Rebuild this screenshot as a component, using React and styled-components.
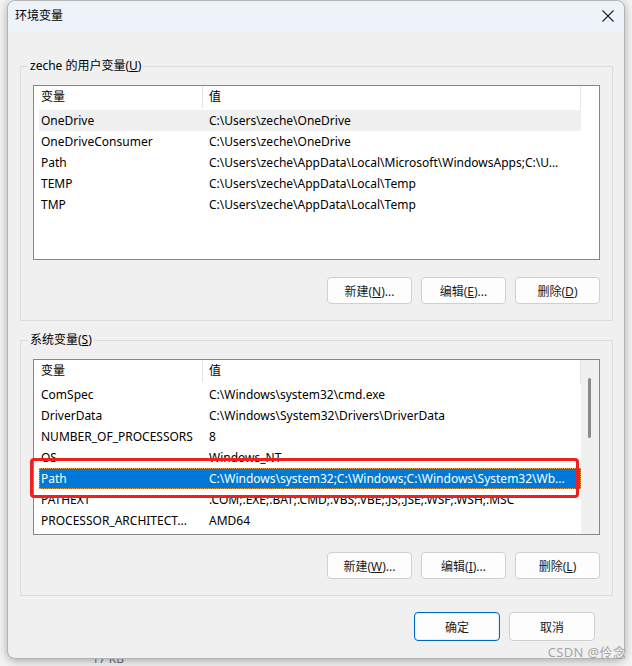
import React from "react";
import styled, { createGlobalStyle } from "styled-components";

const GlobalStyle = createGlobalStyle`
  body {
    margin: 0;
    background: #f3f3f3;
    font-family: "Noto Sans", "Noto Sans CJK SC", sans-serif;
    font-size: 12px;
    color: #000;
  }
`;

const Page = styled.div`
  position: relative;
  width: 632px;
  height: 666px;
  overflow: hidden;
`;

const Window = styled.div`
  position: relative;
  z-index: 1;
  box-sizing: border-box;
  margin-left: 7px;
  width: 618px;
  height: 659px;
  background: #f0f0f0;
  border: 1px solid #b4b4b4;
  border-radius: 8px;
  box-shadow: 0 2px 9px rgba(0, 0, 0, 0.3);
  display: flex;
  flex-direction: column;
`;

const TitleBar = styled.div`
  height: 30px;
  flex: none;
  display: flex;
  align-items: center;
  justify-content: space-between;
  padding: 0 8px 0 7px;
  background: #eef3f9;
  border-radius: 8px 8px 0 0;
  line-height: 16px;
`;

const CloseButton = styled.div`
  width: 16px;
  height: 16px;
  display: flex;
  align-items: center;
  justify-content: center;
`;

const Content = styled.div`
  flex: 1;
  display: flex;
  flex-direction: column;
  padding: 27px 11px 0 12px;
`;

const Group = styled.fieldset`
  margin: 0 0 ${(p) => p.$gap || 0}px 0;
  padding: 11px 12px 16px 12px;
  border: 1px solid #dcdcdc;
  min-width: 0;
`;

const Legend = styled.legend`
  padding: 0 2px;
  margin-left: -5px;
  line-height: 16px;
`;

const ListBox = styled.div`
  position: relative;
  box-sizing: border-box;
  display: flex;
  height: ${(p) => p.$height}px;
  border: 1px solid #828790;
  background: #fff;
`;

const ListMain = styled.div`
  width: 547px;
  flex: none;
  display: flex;
  flex-direction: column;
`;

const ListSide = styled.div`
  flex: 1;
  position: relative;
  background: ${(p) => (p.$scroll ? "#f0f0f0" : "#fff")};
`;

const Thumb = styled.div`
  position: absolute;
  left: 7px;
  top: 18px;
  width: 3px;
  height: 60px;
  border-radius: 2px;
  background: #8a8a8a;
`;

const Header = styled.div`
  display: grid;
  grid-template-columns: 168px 1fr;
  height: 24px;
  line-height: 22px;
  border-right: 1px solid #e5e5e5;
`;

const HeaderCell = styled.div`
  padding-left: ${(p) => (p.$first ? 7 : 6)}px;
  border-left: ${(p) => (p.$first ? "none" : "1px solid #e5e5e5")};
  margin-bottom: 2px;
`;

const Rows = styled.div`
  padding-left: 5px;
  display: flex;
  flex-direction: column;
`;

const Row = styled.div`
  position: relative;
  display: grid;
  grid-template-columns: 163px 1fr;
  height: 21px;
  line-height: 21px;
  background: ${(p) =>
    p.$state === "active" ? "#0078d7" : p.$state === "soft" ? "#f0f0f0" : "transparent"};
  color: ${(p) => (p.$state === "active" ? "#fff" : "#000")};
  outline: ${(p) => (p.$state === "active" ? "1px dotted #e9a64a" : "none")};
  outline-offset: -1px;
`;

const Cell = styled.div`
  padding-left: ${(p) => (p.$first ? 2 : 7)}px;
  white-space: nowrap;
  overflow: hidden;
`;

const Marker = styled.div`
  position: absolute;
  left: -9px;
  top: -10px;
  width: 549px;
  height: 40px;
  box-sizing: border-box;
  border: 3px solid #f2201c;
  border-radius: 4px;
  z-index: 2;
  pointer-events: none;
`;

const ButtonRow = styled.div`
  display: flex;
  justify-content: flex-end;
  gap: ${(p) => p.$gap || 10}px;
  margin-top: ${(p) => p.$top || 0}px;
  padding-right: ${(p) => p.$right || 0}px;
`;

const Button = styled.button`
  box-sizing: border-box;
  width: ${(p) => p.$w || 85}px;
  height: ${(p) => p.$h || 27}px;
  padding: 0;
  font-family: inherit;
  font-size: 12px;
  color: #1b1b1b;
  background: #fdfdfd;
  border: 1px solid ${(p) => (p.$primary ? "#0067c0" : "#d0d0d0")};
  border-radius: 4px;
  box-shadow: ${(p) => (p.$primary ? "inset 0 0 0 1px #e6f0fa" : "none")};
`;

const Behind = styled.div`
  margin-top: -8px;
  padding-left: 92px;
  color: #65717e;
  font-size: 12px;
  line-height: 16px;
`;

const Watermark = styled.div`
  position: absolute;
  right: 6px;
  top: 642px;
  z-index: 3;
  font-size: 13px;
  color: rgba(150, 150, 150, 0.85);
  letter-spacing: 0.3px;
`;

const userVars = [
  ["OneDrive", "C:\\Users\\zeche\\OneDrive", "soft"],
  ["OneDriveConsumer", "C:\\Users\\zeche\\OneDrive"],
  ["Path", "C:\\Users\\zeche\\AppData\\Local\\Microsoft\\WindowsApps;C:\\U..."],
  ["TEMP", "C:\\Users\\zeche\\AppData\\Local\\Temp"],
  ["TMP", "C:\\Users\\zeche\\AppData\\Local\\Temp"],
];

const systemVars = [
  ["ComSpec", "C:\\Windows\\system32\\cmd.exe"],
  ["DriverData", "C:\\Windows\\System32\\Drivers\\DriverData"],
  ["NUMBER_OF_PROCESSORS", "8"],
  ["OS", "Windows_NT"],
  ["Path", "C:\\Windows\\system32;C:\\Windows;C:\\Windows\\System32\\Wb...", "active"],
  ["PATHEXT", ".COM;.EXE;.BAT;.CMD;.VBS;.VBE;.JS;.JSE;.WSF;.WSH;.MSC"],
  ["PROCESSOR_ARCHITECT...", "AMD64"],
];

const VarList = ({ rows, height, scroll }) => (
  <ListBox $height={height}>
    <ListMain>
      <Header>
        <HeaderCell $first>变量</HeaderCell>
        <HeaderCell>值</HeaderCell>
      </Header>
      <Rows>
        {rows.map(([name, value, state]) => (
          <Row key={name + value} $state={state}>
            <Cell $first>{name}</Cell>
            <Cell>{value}</Cell>
            {state === "active" && <Marker />}
          </Row>
        ))}
      </Rows>
    </ListMain>
    <ListSide $scroll={scroll}>{scroll && <Thumb />}</ListSide>
  </ListBox>
);

const App = () => {
  return (
    <Page>
      <GlobalStyle />
      <Window>
        <TitleBar>
          <span>环境变量</span>
          <CloseButton>
            <svg width="12" height="12" viewBox="0 0 12 12">
              <path d="M0.5 0.5 L11.5 11.5 M11.5 0.5 L0.5 11.5" stroke="#222" strokeWidth="1.1" fill="none" />
            </svg>
          </CloseButton>
        </TitleBar>
        <Content>
          <Group $gap={11}>
            <Legend>
              zeche 的用户变量(<u>U</u>)
            </Legend>
            <VarList rows={userVars} height={175} />
            <ButtonRow $top={17} $gap={9}>
              <Button>新建(<u>N</u>)...</Button>
              <Button>编辑(<u>E</u>)...</Button>
              <Button>删除(<u>D</u>)</Button>
            </ButtonRow>
          </Group>
          <Group>
            <Legend>
              系统变量(<u>S</u>)
            </Legend>
            <VarList rows={systemVars} height={176} scroll />
            <ButtonRow $top={17} $gap={9}>
              <Button>新建(<u>W</u>)...</Button>
              <Button>编辑(<u>I</u>)...</Button>
              <Button>删除(<u>L</u>)</Button>
            </ButtonRow>
          </Group>
          <ButtonRow $top={16} $gap={9} $right={18}>
            <Button $primary $w={86} $h={29}>确定</Button>
            <Button $w={86} $h={29}>取消</Button>
          </ButtonRow>
        </Content>
      </Window>
      <Behind>17 KB</Behind>
      <Watermark>CSDN @伶念</Watermark>
    </Page>
  );
};

export default App;
